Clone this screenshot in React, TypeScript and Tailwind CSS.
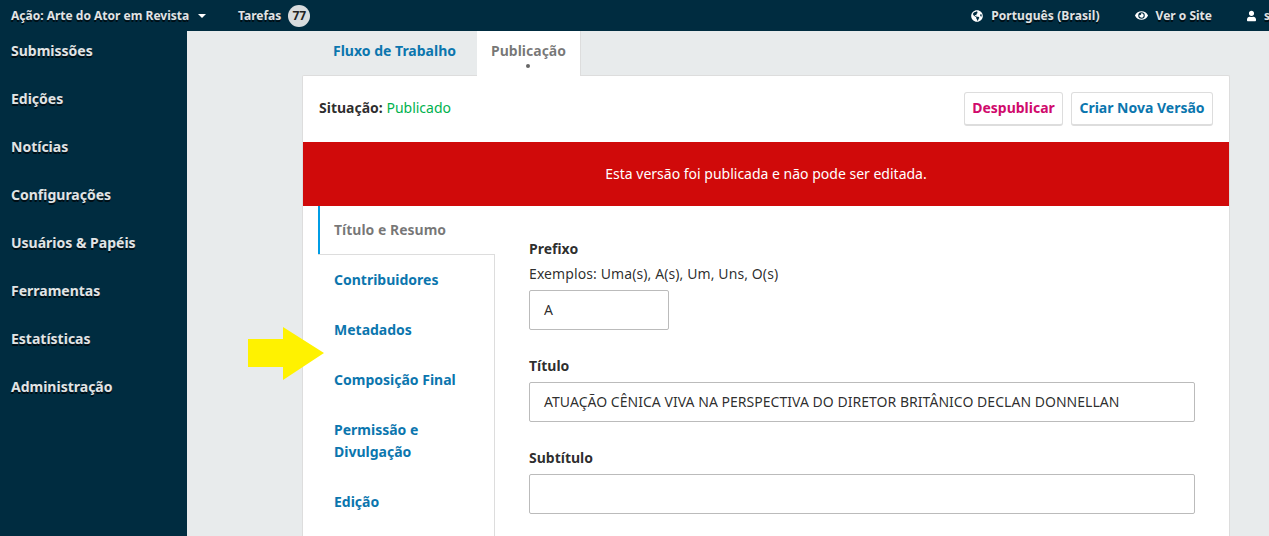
import React from "react";
import { FaGlobeAmericas, FaEye, FaUser } from "react-icons/fa";

const sideItems = [
  "Submissões",
  "Edições",
  "Notícias",
  "Configurações",
  "Usuários & Papéis",
  "Ferramentas",
  "Estatísticas",
  "Administração",
];

const subTabs = ["Contribuidores", "Metadados", "Composição Final"];

const shadow = "[text-shadow:0_2px_0_rgba(0,0,0,0.7)]";

const App = () => {
  return (
    <div className="h-[536px] w-[1269px] overflow-hidden bg-[#e8ebec] font-['Noto_Sans',sans-serif] text-[14px] text-[rgba(0,0,0,0.84)]">
      {/* Top bar */}
      <div className={`flex h-[31px] items-center justify-between overflow-hidden bg-[#002c40] text-[12px] font-bold text-[#e1e4e5] ${shadow}`}>
        <div className="flex items-center">
          <span className="ml-[11px] w-[179px] whitespace-nowrap">Ação: Arte do Ator em Revista</span>
          <span className="ml-[8px] h-0 w-0 border-x-[4px] border-t-[4px] border-x-transparent border-t-white" />
          <span className="ml-[32px]">Tarefas</span>
          <span className="ml-[7px] flex h-[22px] w-[22px] items-center justify-center rounded-full bg-[#d8dcde] text-[12px] text-[#222] [text-shadow:none]">
            77
          </span>
        </div>
        <div className="flex items-center">
          <FaGlobeAmericas className="h-[12px] w-[12px] text-white" />
          <span className="ml-[8px] tracking-[0.1px]">Português (Brasil)</span>
          <FaEye className="ml-[35px] h-[13px] w-[13px] text-white" />
          <span className="ml-[8px]">Ver o Site</span>
          <FaUser className="ml-[35px] h-[12px] w-[9px] text-white" />
          <span className="ml-[8px] w-[5px] overflow-hidden">s</span>
        </div>
      </div>

      <div className="flex">
        {/* Sidebar */}
        <div className="h-[505px] w-[187px] shrink-0 bg-[#002c40] pl-[11px] pt-[8px]">
          {sideItems.map((item) => (
            <div key={item} className={`flex h-[48px] items-start pt-[1px] text-[14px] leading-[22px] font-bold text-[#e1e4e5] ${shadow}`}>
              {item}
            </div>
          ))}
        </div>

        {/* Main */}
        <div className="relative flex-1 pl-[115px] pr-[39px]">
          <div className="relative z-10 flex h-[44px] pl-[17px]">
            <div className="flex h-[44px] items-center pl-[14px] pr-[21px] pb-[6px] font-bold text-[#0b76ae]">Fluxo de Trabalho</div>
            <div className="relative flex h-[45px] w-[104px] items-center justify-center border-r border-[#ddd] bg-white pb-[7px] font-bold text-[rgba(0,0,0,0.54)]">
              Publicação
              <span className="absolute bottom-[8px] left-[49px] h-[4px] w-[4px] rounded-full bg-[#666]" />
            </div>
          </div>

          <div className="h-[461px] overflow-hidden rounded-t-[2px] border-x border-t border-[#ddd] bg-white">
            <div className="flex h-[66px] items-center justify-between pl-[16px] pr-[16px]">
              <div className="pb-[3px]">
                <span className="font-bold">Situação:</span> <span className="text-[#00b24e]">Publicado</span>
              </div>
              <div className="flex gap-[8px] pb-[1px]">
                <button className="h-[34px] w-[99px] rounded-[3px] border border-b-[2px] border-[#ddd] bg-white pb-[2px] font-bold text-[#d00a6c]">
                  Despublicar
                </button>
                <button className="h-[34px] w-[142px] rounded-[3px] border border-b-[2px] border-[#ddd] bg-white pb-[2px] font-bold text-[#0b76ae]">
                  Criar Nova Versão
                </button>
              </div>
            </div>

            <div className="flex h-[64px] items-center justify-center bg-[#d00a0a] pb-[1px] text-white">
              Esta versão foi publicada e não pode ser editada.
            </div>

            <div className="flex">
              {/* Vertical tabs */}
              <div className="w-[192px] shrink-0 pl-[15px]">
                <div className="flex h-[48px] items-center border-l-2 border-[#009de5] pb-[2px] pl-[14px] font-bold text-[rgba(0,0,0,0.54)]">
                  Título e Resumo
                </div>
                <div className="h-[300px] border-r border-t border-[#ddd] pl-[16px] font-bold text-[#0b76ae]">
                  {subTabs.map((tab) => (
                    <div key={tab} className="flex h-[50px] items-center pb-[2px]">
                      {tab}
                    </div>
                  ))}
                  <div className="flex h-[72px] items-center leading-[22px]">
                    Permissão e
                    <br />
                    Divulgação
                  </div>
                  <div className="flex h-[50px] items-center pb-[2px]">Edição</div>
                </div>
              </div>

              {/* Form */}
              <div className="flex-1 pl-[34px] pr-[34px] pt-[33px]">
                <div className="font-bold leading-[20px]">Prefixo</div>
                <div className="mt-[5px] leading-[20px] tracking-[0.1px]">Exemplos: Uma(s), A(s), Um, Uns, O(s)</div>
                <div className="mt-[6px] flex h-[40px] w-[140px] items-center rounded-[2px] border border-[#bbb] px-[14px] pb-[2px]">
                  A
                </div>
                <div className="mt-[26px] font-bold leading-[20px]">Título</div>
                <div className="mt-[6px] flex h-[40px] items-center whitespace-nowrap rounded-[2px] border border-[#bbb] px-[14px] pb-[2px] tracking-[0.03px]">
                  ATUAÇÃO CÊNICA VIVA NA PERSPECTIVA DO DIRETOR BRITÂNICO DECLAN DONNELLAN
                </div>
                <div className="mt-[26px] font-bold leading-[20px]">Subtítulo</div>
                <div className="mt-[6px] h-[40px] rounded-[2px] border border-[#bbb]" />
              </div>
            </div>
          </div>

          {/* Yellow arrow annotation */}
          <svg className="absolute left-[61px] top-[296px] z-20" width="76" height="54" viewBox="0 0 76 54">
            <path d="M0 12H35V0L76 26L35 53V40H0Z" fill="#fff200" />
          </svg>
        </div>
      </div>
    </div>
  );
};

export default App;
